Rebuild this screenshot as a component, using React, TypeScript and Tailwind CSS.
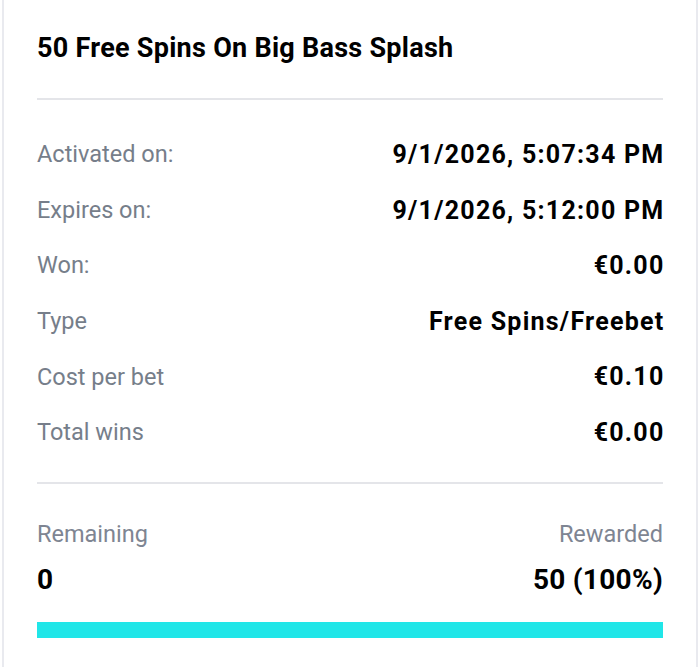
const rows = [
  { label: 'Activated on:', value: '9/1/2026, 5:07:34 PM' },
  { label: 'Expires on:', value: '9/1/2026, 5:12:00 PM' },
  { label: 'Won:', value: '€0.00' },
  { label: 'Type', value: 'Free Spins/Freebet' },
  { label: 'Cost per bet', value: '€0.10' },
  { label: 'Total wins', value: '€0.00' },
];

export default function App() {
  return (
    <div className="h-[667px] w-[700px] bg-white font-['Roboto',sans-serif]">
      <div className="mx-[2px] h-full border-x-2 border-[#e9eaef] px-[33px]">
        <div className="flex h-[100px] items-end border-b-2 border-[#e4e5e9] pb-[34px]">
          <h2 className="text-[27px] leading-8 font-bold tracking-[0.01em] text-black">
            50 Free Spins On Big Bass Splash
          </h2>
        </div>
        <div className="border-b-2 border-[#e4e5e9] pt-[27px] pb-[21px]">
          {rows.map((row) => (
            <div key={row.label} className="flex h-[55.6px] items-center justify-between">
              <span className="text-[23.5px] text-[#767e8a]">{row.label}</span>
              <span className="-mr-[1.5px] text-[25px] font-bold tracking-[0.05em] text-black">
                {row.value}
              </span>
            </div>
          ))}
        </div>
        <div className="flex items-start justify-between pt-[34px]">
          <div className="flex flex-col gap-[14px]">
            <span className="text-[23.5px] leading-8 text-[#7e8592]">Remaining</span>
            <span className="text-[28px] leading-8 font-bold text-black">0</span>
          </div>
          <div className="flex flex-col items-end gap-[14px]">
            <span className="text-[23.5px] leading-8 text-[#7e8592]">Rewarded</span>
            <span className="text-[28px] leading-8 font-bold tracking-[0.01em] text-black">
              50 (100%)
            </span>
          </div>
        </div>
        <div className="mt-[26px] h-4 w-full bg-[#20e6e8]"></div>
      </div>
    </div>
  );
}
